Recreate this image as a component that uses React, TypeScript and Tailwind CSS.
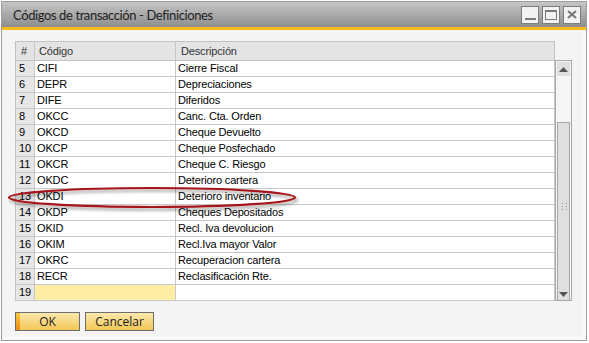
import React from "react";

const rows: [string, string, string][] = [
  ["5", "CIFI", "Cierre Fiscal"],
  ["6", "DEPR", "Depreciaciones"],
  ["7", "DIFE", "Diferidos"],
  ["8", "OKCC", "Canc. Cta. Orden"],
  ["9", "OKCD", "Cheque Devuelto"],
  ["10", "OKCP", "Cheque Posfechado"],
  ["11", "OKCR", "Cheque C. Riesgo"],
  ["12", "OKDC", "Deterioro cartera"],
  ["13", "OKDI", "Deterioro inventario"],
  ["14", "OKDP", "Cheques Depositados"],
  ["15", "OKID", "Recl. Iva devolucion"],
  ["16", "OKIM", "Recl.Iva mayor Valor"],
  ["17", "OKRC", "Recuperacion cartera"],
  ["18", "RECR", "Reclasificación Rte."],
  ["19", "", ""],
];

function TitleButton({ children }: { children: React.ReactNode }) {
  return (
    <div className="w-[18px] h-[18px] border border-[#7d7d7d] bg-[#f2f2f2] flex items-center justify-center">
      {children}
    </div>
  );
}

export default function App() {
  const font = { fontFamily: '"Liberation Sans", Arial, sans-serif' };
  return (
    <div className="relative w-[589px] h-[343px] bg-white pt-[1px] pl-[1px]" style={font}>
      <div className="w-[586px] h-[340px] border border-[#9c9c9c] flex flex-col bg-[#f4f4f4]">
        {/* Title bar */}
        <div className="h-[25px] flex items-center justify-between pl-[11px] pr-[5px] bg-gradient-to-b from-[#c6c6c6] to-[#8e8e8e]">
          <span
            className="text-[13px] tracking-[-0.4px] text-[#1e1e1e] leading-none pt-[1px]"
            style={{ fontFamily: 'Lato, "Noto Sans", sans-serif' }}
          >
            Códigos de transacción - Definiciones
          </span>
          <div className="flex gap-[3px]">
            <TitleButton>
              <div className="w-[11px] h-[2px] bg-[#7a7a7a] mt-[8px]" />
            </TitleButton>
            <TitleButton>
              <div className="w-[12px] h-[10px] border border-[#7a7a7a] border-t-2" />
            </TitleButton>
            <TitleButton>
              <svg width="10" height="9" viewBox="0 0 10 9">
                <path d="M1 1 L9 8 M9 1 L1 8" stroke="#7a7a7a" strokeWidth="2.2" />
              </svg>
            </TitleButton>
          </div>
        </div>
        <div className="h-[3px] bg-[#fcbc17]" />

        {/* Body */}
        <div className="flex-1 pl-[13px] pt-[11px] border-r-[3px] border-b-[3px] border-[#f9f9f9]">
          <div className="flex items-start">
            {/* Table */}
            <div className="w-[540px] text-[11px] text-black tracking-[-0.15px]">
              <div className="flex h-[20px] bg-[#e4e4e4] border border-[#c2c2c2] text-[#333] items-center">
                <div className="w-[19px] h-full flex items-center pl-[5px] border-r border-[#c8c8c8]">#</div>
                <div className="w-[141px] h-full flex items-center pl-[4px] border-r border-[#c8c8c8]">Código</div>
                <div className="flex-1 h-full flex items-center pl-[5px]">Descripción</div>
              </div>
              {rows.map(([n, c, d]) => (
                <div key={n} className="flex h-[16px] border-x border-b border-[#c8c8c8] border-l-[#c2c2c2]">
                  <div className="w-[19px] h-full bg-[#e6e6e6] flex items-center pl-[3px] border-r border-[#c8c8c8]">{n}</div>
                  <div
                    className={
                      "w-[141px] h-full flex items-center pl-[2px] border-r border-[#c8c8c8] " +
                      (n === "19" ? "bg-[#fdeea4]" : "bg-white")
                    }
                  >
                    {c}
                  </div>
                  <div className="flex-1 h-full bg-white flex items-center pl-[2px]">{d}</div>
                </div>
              ))}
            </div>
            {/* Scrollbar */}
            <div className="mt-[19px] w-[17px] h-[241px] border border-[#a9a9a9] bg-[#f5f5f5] flex flex-col px-[1px] pt-[1px]">
              <div className="h-[14px] bg-[#dfdfdf] flex items-center justify-center">
                <svg width="9" height="5" viewBox="0 0 9 5">
                  <path d="M0 5 L4.5 0 L9 5 Z" fill="#555" />
                </svg>
              </div>
              <div className="h-[46px]" />
              <div className="flex-1 bg-[#dfdfdf] border-x border-t border-[#a9a9a9] flex flex-col items-center justify-between">
                <div />
                <div className="grid grid-cols-2 gap-x-[2px] gap-y-[1px]">
                  {[0, 1, 2, 3, 4, 5].map((i) => (
                    <div key={i} className="w-[2px] h-[2px] bg-[#f7f7f7] border-r border-b border-[#b8b8b8]" />
                  ))}
                </div>
                <div className="h-[12px] flex items-center">
                  <svg width="9" height="5" viewBox="0 0 9 5">
                    <path d="M0 0 L9 0 L4.5 5 Z" fill="#555" />
                  </svg>
                </div>
              </div>
            </div>
          </div>

          {/* Buttons */}
          <div className="flex gap-[5px] mt-[11px] text-[12px] text-[#222]" style={{ fontFamily: '"Open Sans", sans-serif' }}>
            <div className="relative w-[65px] h-[19px] border border-[#6e6e6e] bg-gradient-to-b from-[#fbe9ac] to-[#f3c752] flex items-center justify-center">
              <div className="absolute left-0 top-0 bottom-0 w-[4px] bg-gradient-to-b from-[#f9c93a] to-[#ee8a12]" />
              OK
            </div>
            <div className="w-[69px] h-[19px] border border-[#6e6e6e] bg-gradient-to-b from-[#fbe9ac] to-[#f3c752] flex items-center justify-center">
              Cancelar
            </div>
          </div>
        </div>
      </div>

      {/* Annotation ellipse */}
      <svg className="absolute left-0 top-0 pointer-events-none" width="589" height="343">
        <defs>
          <filter id="sh" x="-10%" y="-50%" width="120%" height="200%">
            <feDropShadow dx="2" dy="2.5" stdDeviation="1.5" floodColor="#000" floodOpacity="0.4" />
          </filter>
        </defs>
        <ellipse cx="152" cy="197.5" rx="143" ry="9.5" fill="none" stroke="#a5141a" strokeWidth="2.2" filter="url(#sh)" />
      </svg>
    </div>
  );
}
